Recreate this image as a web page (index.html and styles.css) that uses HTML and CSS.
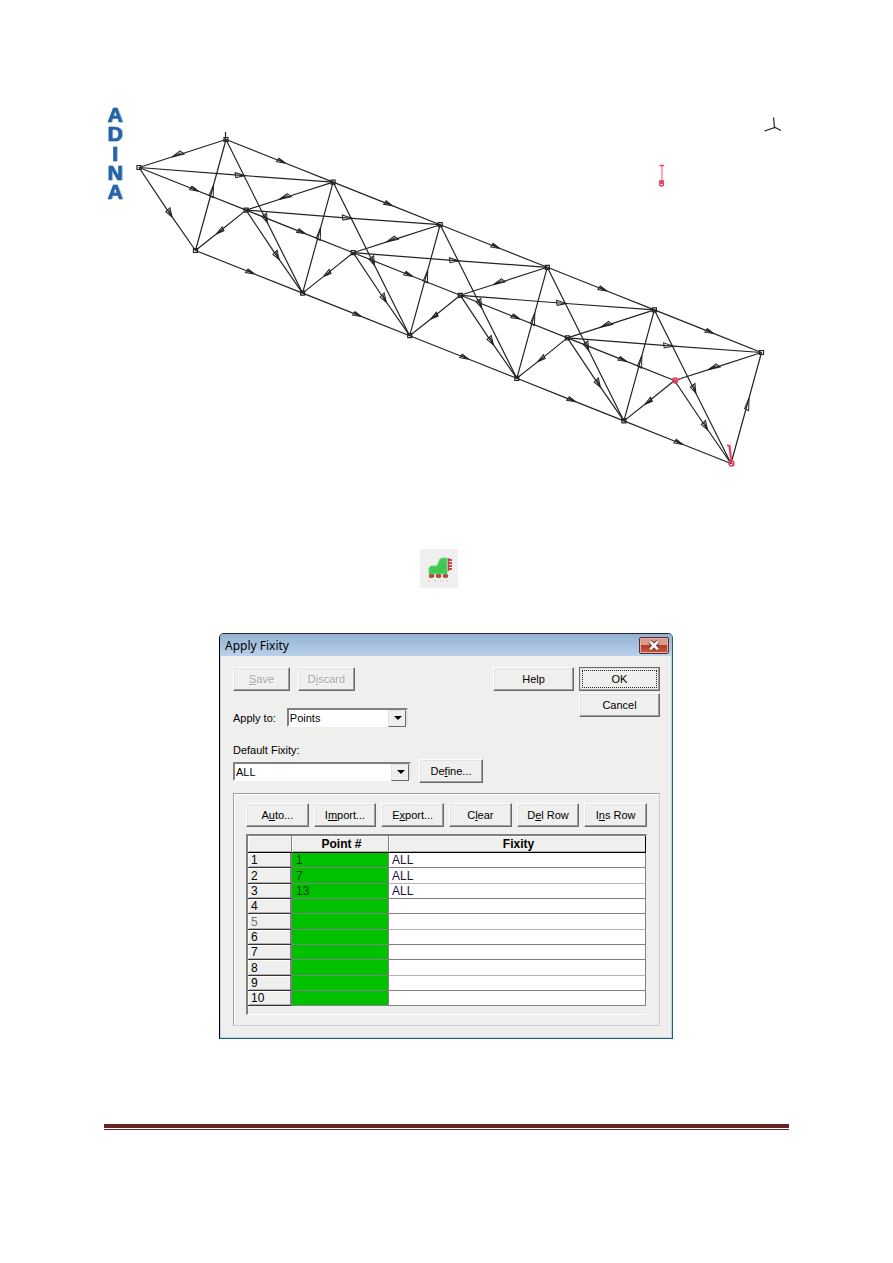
FILE: index.html
```html
<!DOCTYPE html>
<html lang="en">
<head>
<meta charset="utf-8">
<title>Apply Fixity</title>
<link rel="stylesheet" href="styles.css">
</head>
<body>
<main class="page">
  <svg class="model" viewBox="104 100 685 380" role="img" aria-label="ADINA truss model">
    <defs>
      <marker id="wide" class="head" viewBox="-7 -5 20 10" markerWidth="20" markerHeight="10" refX="0" refY="0" orient="auto" markerUnits="userSpaceOnUse"><path d="M-3 -2.5 L7 0 L-2 2.5 Z"/></marker>
      <marker id="small" class="head" viewBox="-7 -5 20 10" markerWidth="20" markerHeight="10" refX="0" refY="0" orient="auto" markerUnits="userSpaceOnUse"><path d="M-2 -2.3 L6 0 L-3 2 Z M-2 -1 L4 0"/></marker>
      <marker id="half" class="head" viewBox="-7 -5 20 10" markerWidth="20" markerHeight="10" refX="0" refY="0" orient="auto" markerUnits="userSpaceOnUse"><path d="M10.5 0 L1 3.2 L-2 -1 Z M1 1.5 L8 0"/></marker>
      <marker id="steep" class="head" viewBox="-7 -5 20 10" markerWidth="20" markerHeight="10" refX="0" refY="0" orient="auto" markerUnits="userSpaceOnUse"><path d="M10 0 L2 2.3 L1 -3.5 Z M2 -1.5 L8 0"/></marker>
      <marker id="up" class="head" viewBox="-7 -5 20 10" markerWidth="20" markerHeight="10" refX="0" refY="0" orient="auto" markerUnits="userSpaceOnUse"><path d="M0 -1.5 L-1 3 L11.5 0 Z"/></marker>
      <g id="bay">
        <path marker-mid="url(#small)" d="M226 139.5 L280 161 L333.1 182.1"/>
        <path marker-mid="url(#small)" d="M139 167.5 L193 189 L246.1 210.1"/>
        <path marker-mid="url(#small)" d="M195.5 250.5 L249 271.8 L302.6 293.1"/>
        <path marker-mid="url(#half)" d="M226 139.5 L182 153.7 L139 167.5"/>
        <path marker-mid="url(#steep)" d="M139 167.5 L166.5 208.8 L195.5 250.5"/>
        <path marker-mid="url(#up)" d="M195.5 250.5 L210.5 196 L226 139.5"/>
        <path marker-mid="url(#wide)" d="M139 167.5 L238 175.2 L333.1 182.1"/>
        <path marker-mid="url(#steep)" d="M226 139.5 L263 213.8 L302.6 293.1"/>
        <path marker-mid="url(#small)" d="M246.1 210.1 L221 230.3 L195.5 250.5"/>
        <path d="M224 137.5h4v4h-4z M137 165.5h4v4h-4z M193.5 248.5h4v4h-4z"/>
      </g>
    </defs>
    <text class="logo" text-anchor="middle"><tspan x="115" y="122">A</tspan><tspan x="115" y="141">D</tspan><tspan x="115" y="161">I</tspan><tspan x="115" y="180">N</tspan><tspan x="115" y="199">A</tspan></text>
    <g class="truss">
      <use href="#bay"/>
      <use href="#bay" x="107.1" y="42.6"/>
      <use href="#bay" x="214.2" y="85.2"/>
      <use href="#bay" x="321.3" y="127.8"/>
      <use href="#bay" x="428.4" y="170.4"/>
      <path marker-mid="url(#half)" d="M761.5 352.5 L718 366.6 L674.5 380.5"/>
      <path marker-mid="url(#steep)" d="M674.5 380.5 L702 421.5 L731 463.5"/>
      <path marker-mid="url(#up)" d="M731 463.5 L746 409 L761.5 352.5"/>
      <path d="M759.5 350.5h4v4h-4z M225.5 132v8 M773.5 117.5l1 10.2 M764.5 131l10.5-3.5 6 3"/>
    </g>
    <g class="fixity">
      <path class="stem" d="M662 166v17"/>
      <path d="M659.5 165.5h4.5 M659 181h5 M660 181l3 3 M663.5 181l-3 3"/>
      <circle cx="661.5" cy="184" r="2"/>
      <circle cx="675" cy="380.5" r="2.5"/>
      <path d="M677 380l4-1.5 M673 379l4 3"/>
      <path d="M729 446l2 15 M730 446l1.5 15 M727 445.5h3.5 M729.5 461l4 4"/>
      <circle cx="731.5" cy="463.5" r="2.5"/>
    </g>
  </svg>

  <div class="workspace">
    <div class="tool">
      <svg class="tool-icon" viewBox="0 0 38 39" role="img" aria-label="Apply fixity">
        <rect width="38" height="39" fill="#efefef"/>
        <path d="M9 25v-6l2-2h6l3-7 3-1h4v16z" fill="#3fca52" stroke="#67d675"/>
        <path d="M20 21l3-3 2 1" stroke="#42a858" fill="none"/>
        <path d="M28.5 9v13" stroke="#b34a4a" stroke-width="1.5"/>
        <path d="M29 11h3M29 14h3M29 17h3M29 20h3" stroke="#d43f4b" stroke-width="2"/>
        <g fill="#f0aaa0" stroke="#a53428" stroke-width="1.5"><ellipse cx="11.5" cy="27" rx="2" ry="1.2"/><ellipse cx="18.5" cy="27" rx="2" ry="1.2"/><ellipse cx="25.5" cy="27" rx="2" ry="1.2"/></g>
        <path d="M8 32h20" stroke="#dcb9c4" stroke-dasharray="2 4"/>
      </svg>
    </div>

    <section class="dialog" role="dialog" aria-labelledby="dialog-title">
      <header class="titlebar">
        <h1 class="title" id="dialog-title">Apply Fixity</h1>
        <button class="close" type="button" aria-label="Close"><svg class="close-icon" viewBox="0 0 12 10"><path d="M2.5 1.5l7 7M9.5 1.5l-7 7" stroke="#6b302b" stroke-width="4"/><path d="M2.5 1.5l7 7M9.5 1.5l-7 7" stroke="#fff" stroke-width="2.4"/></svg></button>
      </header>
      <form class="body">
        <div class="top">
          <div class="settings">
            <div class="row">
              <button class="btn save" type="button" disabled><u>S</u>ave</button>
              <button class="btn save" type="button" disabled>D<u>i</u>scard</button>
            </div>
            <div class="row apply">
              <label for="apply-to">Apply to:</label>
              <span class="combo points"><select id="apply-to"><option>Points</option><option>Lines</option></select></span>
            </div>
            <label class="default-label" for="default-fixity">Default Fixity:</label>
            <div class="row">
              <span class="combo all"><select id="default-fixity"><option>ALL</option><option>NONE</option></select></span>
              <button class="btn define" type="button">De<u>f</u>ine...</button>
            </div>
          </div>
          <div class="actions">
            <button class="btn" type="button">Help</button>
            <div class="confirm">
              <button class="btn ok" type="submit">OK</button>
              <button class="btn" type="button">Cancel</button>
            </div>
          </div>
        </div>
        <div class="group">
          <div class="tools">
            <button class="btn" type="button">A<u>u</u>to...</button>
            <button class="btn" type="button">I<u>m</u>port...</button>
            <button class="btn" type="button">E<u>x</u>port...</button>
            <button class="btn" type="button">C<u>l</u>ear</button>
            <button class="btn" type="button">D<u>e</u>l Row</button>
            <button class="btn" type="button">I<u>n</u>s Row</button>
          </div>
          <div class="grid">
            <table class="table">
              <colgroup><col class="col-num"><col class="col-point"><col></colgroup>
              <thead><tr><th></th><th scope="col">Point #</th><th scope="col">Fixity</th></tr></thead>
              <tbody>
                <tr><th scope="row">1</th><td>1</td><td>ALL</td></tr>
                <tr><th scope="row">2</th><td>7</td><td>ALL</td></tr>
                <tr><th scope="row">3</th><td>13</td><td>ALL</td></tr>
                <tr><th scope="row">4</th><td></td><td></td></tr>
                <tr><th scope="row" class="soft">5</th><td></td><td></td></tr>
                <tr><th scope="row">6</th><td></td><td></td></tr>
                <tr><th scope="row">7</th><td></td><td></td></tr>
                <tr><th scope="row">8</th><td></td><td></td></tr>
                <tr><th scope="row">9</th><td></td><td></td></tr>
                <tr><th scope="row">10</th><td></td><td></td></tr>
              </tbody>
            </table>
          </div>
        </div>
      </form>
    </section>
  </div>
  <footer class="rule"></footer>
</main>
</body>
</html>
```
FILE: styles.css
```css
* { box-sizing: border-box; }
body { margin: 0; background: #fff; color: #000; font-family: "Liberation Sans", Arial, sans-serif; font-size: 11px; line-height: 14px; }
button, select { font: inherit; color: inherit; margin: 0; }
u { text-underline-offset: 1px; }

.page { padding: 100px 104px 133px; }
.model { display: block; width: 100%; height: auto; }
.truss, .head { fill: none; stroke: #222326; stroke-width: 1.2; }
.head { stroke-width: 1; }
.logo { font-size: 21px; font-weight: bold; fill: #2563a8; stroke: #2563a8; stroke-width: 0.6; filter: drop-shadow(1px 0 0 #8fb2da); }
.fixity { fill: none; stroke: #e0405c; stroke-width: 1.4; }
.stem { stroke: #ffa5b4; stroke-width: 2; }

.workspace { padding: 69px 1px 0 0; }
.tool { display: flex; justify-content: center; padding-right: 14px; }
.tool-icon { width: 38px; height: 39px; }

.dialog { max-width: 454px; margin: 45px auto 0; border: 1px solid #1f6375; border-left-color: #000; border-top-color: #20262c; border-radius: 5px 5px 0 0; background: #efefed; overflow: hidden; }
.titlebar { display: flex; justify-content: space-between; height: 22px; padding-left: 5px; background: linear-gradient(#93b1d2, #bad1ea); }
.title { margin: 0; font: 12px/24px "Noto Sans", sans-serif; }
.close { display: grid; place-items: center; width: 30px; height: 17px; margin: 3px 3px 0 0; padding: 0; border: 1px solid #5b2a31; border-radius: 2px; background: linear-gradient(#d79a8e 45%, #b93a25 50%, #c65a42); box-shadow: inset 0 0 0 1px #e2b0a6; }
.close-icon { width: 14px; height: 11px; }
.body { padding: 11px 11px 11px 12px; border: solid #b9d1ea; border-width: 0 1px 1px; }

.top { display: flex; justify-content: space-between; }
.row { display: flex; gap: 8px; align-items: center; }
.btn { width: 81px; height: 24px; padding: 0; border: 1px solid; border-color: #fff #696969 #696969 #fff; background: #efefed; box-shadow: inset -1px -1px #a0a0a0, inset 1px 1px #e3e3e3; }
.btn:disabled { color: #a5a5a5; text-shadow: 1px 1px #fff; }
.save { width: 57px; }
.apply { gap: 11px; margin: 17px 0 16px; }
.combo { position: relative; height: 19px; border: 2px solid; border-color: #808080 #e3e3e3 #fff #808080; background: #fff; }
.combo select { display: block; width: 100%; height: 15px; padding: 1px 0 0 1px; border: 0; background: transparent; appearance: none; line-height: 14px; }
.combo::before { content: ""; position: absolute; right: 0; top: 0; width: 16px; height: 15px; border: 1px solid; border-color: #e3e3e3 #696969 #696969 #e3e3e3; background: #efefed; pointer-events: none; }
.combo::after { content: ""; position: absolute; right: 4px; top: 6px; border: 4px solid transparent; border-top-color: #000; border-bottom: 0; pointer-events: none; }
.points { width: 121px; }
.all { width: 178px; }
.default-label { display: block; margin-bottom: 2px; }
.define { width: 64px; }
.actions { display: flex; gap: 5px; align-items: flex-start; }
.confirm { display: grid; gap: 2px; }
.ok { border-color: #696969; outline: 1px dotted #222; outline-offset: -4px; }

.group { margin-top: 10px; padding: 9px 12px 10px; border: 1px solid; border-color: #a0a0a0 #cfcfcf #cfcfcf #a0a0a0; box-shadow: inset 1px 1px #fff; }
.tools { display: grid; grid-template-columns: repeat(6, 1fr); gap: 5px; }
.tools .btn { width: auto; }
.grid { margin-top: 7px; padding-bottom: 8px; border: solid; border-width: 2px 1px 1px 2px; border-color: #808080 #efefed #fff #808080; }
.table { width: 100%; table-layout: fixed; border-collapse: separate; border-spacing: 0; font-size: 12px; line-height: 14px; }
.col-num { width: 44px; }
.col-point { width: 97px; }
.table th, .table td { height: 15px; padding: 0 0 0 4px; text-align: left; border: solid #808080; border-width: 0 1px 1px 0; background: #fff; }
.table th { background: #efefed; font-weight: normal; padding-left: 3px; box-shadow: inset 1px 1px #fff, inset 0 -1px #b0b0b0; }
.table tbody th { border-right-width: 2px; border-bottom-color: #333; }
.table thead th { height: 17px; font-weight: bold; text-align: center; border-bottom-color: #000; }
.table thead th:last-child { border-right-color: #000; }
.table td:nth-child(2) { background: #00c000; color: #063c06; }
.table td:last-child { color: #201040; padding-left: 3px; }
.table tbody tr:nth-child(3n + 2) > * { height: 16px; }
.table tbody tr:nth-child(3n + 2) td:last-child { border-bottom-color: #b4b4b4; }
.table .soft { color: #777; }

.rule { height: 6px; margin-top: 85px; border-top: 4px solid #632423; border-bottom: 1px solid #632423; }
```
